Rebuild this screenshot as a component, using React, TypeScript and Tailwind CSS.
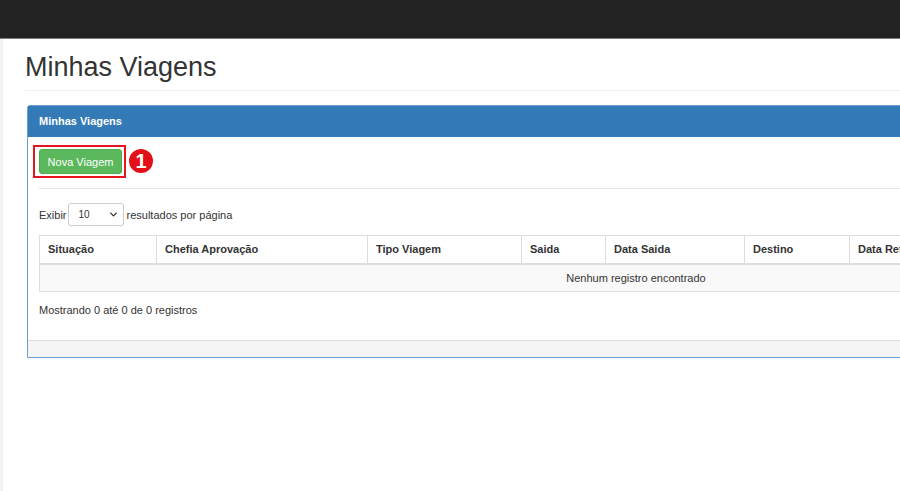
import { ChevronDown } from 'lucide-react';

const columns = [
    { label: 'Situação', w: 'w-[117px]' },
    { label: 'Chefia Aprovação', w: 'w-[211px]' },
    { label: 'Tipo Viagem', w: 'w-[154px]' },
    { label: 'Saida', w: 'w-[84px]' },
    { label: 'Data Saida', w: 'w-[139px]' },
    { label: 'Destino', w: 'w-[105px]' },
    { label: 'Data Retorno', w: 'w-[130px]' },
    { label: 'Retorno', w: 'w-[120px]' },
    { label: 'Ações', w: '' },
];

export default function App() {
    return (
        <div className="w-[900px] h-[491px] overflow-hidden bg-white text-[#333] font-['Liberation_Sans',Arial,sans-serif]">
            {/* Navbar */}
            <div className="h-[39px] bg-[#222] border-b border-[#7d7d7d]" />

            <div className="flex h-[452px]">
                {/* left edge of sidebar */}
                <div className="w-[3px] shrink-0 bg-[#f2f2f2]" />

                <div className="pl-[22px] flex-1 min-w-0">
                    <h1 className="mt-[14px] pb-[7px] border-b border-[#eee] text-[27px] leading-[1.1] font-normal whitespace-nowrap">
                        Minhas Viagens
                    </h1>

                    {/* Panel */}
                    <div className="mt-[14px] ml-[2px] w-[1230px] border border-[#6a9fd0] rounded-t-[3px]">
                        <div className="h-[31px] bg-[#337ab7] px-[11px] flex items-center text-white text-[11px] font-bold">
                            Minhas Viagens
                        </div>

                        <div className="px-[11px] pt-[12px] pb-[21px]">
                            <div className="relative inline-block">
                                <button className="h-[25px] w-[83px] rounded-[3px] bg-[#5cb85c] border border-[#4cae4c] text-white text-[11px]">
                                    Nova Viagem
                                </button>
                                <div className="absolute -left-[6px] -top-[4px] -right-[4px] -bottom-[4px] border-2 border-[#e5161c]" />
                                <div className="absolute left-[90px] top-0 w-[24px] h-[24px] rounded-full bg-[#e3101a] text-white text-[20px] font-bold flex items-center justify-center leading-none">
                                    1
                                </div>
                            </div>

                            <div className="mt-[14px] border-t border-[#e5e5e5]" />

                            <div className="mt-[14px] flex items-center text-[11px] h-[23px]">
                                <span>Exibir</span>
                                <div className="ml-[1px] w-[56px] h-[23px] border border-[#ccc] rounded-[3px] flex items-center justify-between pl-[10px] pr-[4px] text-[10px]">
                                    <span>10</span>
                                    <ChevronDown size={11} strokeWidth={3} />
                                </div>
                                <span className="ml-[3px]">resultados por página</span>
                            </div>

                            <table className="mt-[9px] w-[1194px] border border-[#ddd] border-collapse text-[11px]">
                                <thead>
                                    <tr className="h-[28px] border-b-2 border-[#ddd]">
                                        {columns.map((c) => (
                                            <th key={c.label} className={`${c.w} border border-[#ddd] border-b-2 px-[8px] text-left font-bold`}>
                                                {c.label}
                                            </th>
                                        ))}
                                    </tr>
                                </thead>
                                <tbody>
                                    <tr className="h-[28px] bg-[#f9f9f9]">
                                        <td colSpan={columns.length} className="text-center border border-[#ddd]">
                                            Nenhum registro encontrado
                                        </td>
                                    </tr>
                                </tbody>
                            </table>

                            <div className="mt-[10px] text-[11px]">Mostrando 0 até 0 de 0 registros</div>
                        </div>

                        <div className="h-[17px] bg-[#f5f5f5] border-t border-[#ddd]" />
                    </div>
                </div>
            </div>
        </div>
    );
}
